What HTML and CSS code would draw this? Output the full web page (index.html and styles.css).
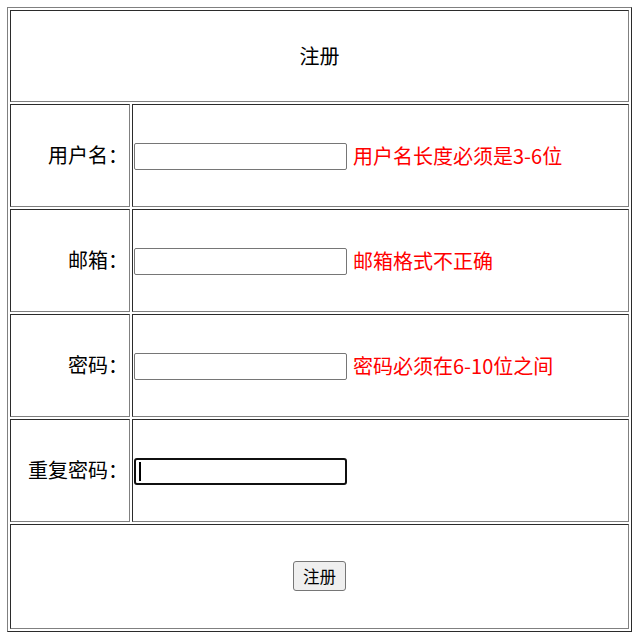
FILE: index.html
```html
<!DOCTYPE html>
<html lang="zh-CN">
<head>
<meta charset="utf-8">
<title>注册</title>
<link rel="stylesheet" href="styles.css">
</head>
<body>
<form class="reg">
<table class="grid">
  <colgroup>
    <col class="col-label">
    <col class="col-value">
  </colgroup>
  <tr class="row-head">
    <td class="head" colspan="2">注册</td>
  </tr>
  <tr class="row">
    <td class="label">用户名：</td>
    <td class="value"><input class="field" type="text"><span class="err">用户名长度必须是3-6位</span></td>
  </tr>
  <tr class="row">
    <td class="label">邮箱：</td>
    <td class="value"><input class="field" type="text"><span class="err">邮箱格式不正确</span></td>
  </tr>
  <tr class="row">
    <td class="label">密码：</td>
    <td class="value"><input class="field" type="password"><span class="err">密码必须在6-10位之间</span></td>
  </tr>
  <tr class="row">
    <td class="label">重复密码：</td>
    <td class="value"><span class="wrap"><input class="field focused" type="password"><span class="caret"></span></span></td>
  </tr>
  <tr class="row-foot">
    <td class="foot" colspan="2"><button class="btn" type="button">注册</button></td>
  </tr>
</table>
</form>
</body>
</html>
```

FILE: styles.css
```css
html, body {
  background: #ffffff;
}
body {
  margin: 7px;
  font-family: "Noto Sans CJK SC", "Microsoft YaHei", sans-serif;
  font-size: 20px;
  color: #000000;
}
.reg {
  margin: 0;
}
.grid {
  width: 625px;
  border-collapse: separate;
  border-spacing: 2px;
  border: 1px solid;
  border-color: #808080 #2b2b2b #2b2b2b #808080;
  table-layout: fixed;
}
.col-label {
  width: 120px;
}
.col-value {
  width: 497px;
}
.grid td {
  border: 1px solid;
  border-color: #2b2b2b #808080 #808080 #2b2b2b;
  padding: 1px 1px 3px;
  vertical-align: middle;
  box-sizing: border-box;
}
.row-head {
  height: 92px;
}
.row {
  height: 103px;
}
.row-foot {
  height: 105px;
}
.head, .foot {
  text-align: center;
}
.label {
  text-align: right;
  white-space: nowrap;
}
.value {
  white-space: nowrap;
}
.field {
  width: 213px;
  height: 27px;
  box-sizing: border-box;
  border: 1px solid #767676;
  border-radius: 2px;
  padding: 0;
  margin: 0;
  vertical-align: middle;
  background: #ffffff;
  outline: none;
}
.field.focused {
  border: 2px solid #101010;
  border-radius: 3px;
}
.wrap {
  position: relative;
  display: inline-block;
  vertical-align: middle;
  line-height: 0;
}
.caret {
  position: absolute;
  left: 5px;
  top: 4px;
  width: 2px;
  height: 19px;
  background: #000000;
}
.err {
  color: #ff0000;
  margin-left: 6px;
  vertical-align: middle;
  position: relative;
  top: -1px;
}
.btn {
  width: 53px;
  height: 30px;
  padding: 0;
  margin: 0;
  font-family: "Noto Sans CJK SC", "Microsoft YaHei", sans-serif;
  font-size: 16.5px;
  line-height: 1;
  color: #000000;
  background: #efefef;
  border: 1px solid #767676;
  border-radius: 3px;
}
```
